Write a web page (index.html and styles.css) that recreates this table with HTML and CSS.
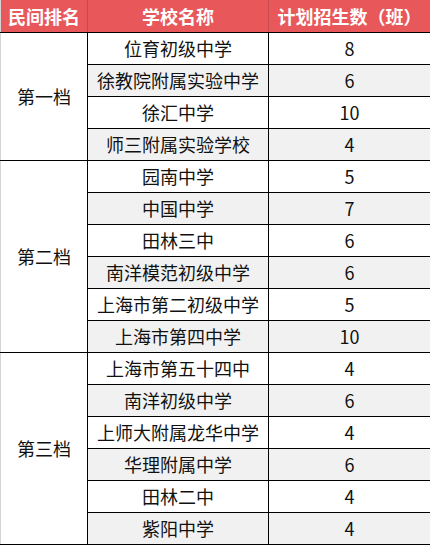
FILE: index.html
```html
<!DOCTYPE html>
<html lang="zh">
<head>
<meta charset="utf-8">
<link rel="stylesheet" href="styles.css">
</head>
<body>
<table class="plan">
  <colgroup>
    <col class="c1"><col class="c2"><col class="c3">
  </colgroup>
  <thead>
    <tr class="head">
      <th>民间排名</th><th>学校名称</th><th>计划招生数（班）</th>
    </tr>
  </thead>
  <tbody>
    <tr><td class="tier" rowspan="4">第一档</td><td>位育初级中学</td><td>8</td></tr>
    <tr class="alt"><td>徐教院附属实验中学</td><td>6</td></tr>
    <tr><td>徐汇中学</td><td>10</td></tr>
    <tr class="alt"><td>师三附属实验学校</td><td>4</td></tr>
    <tr><td class="tier" rowspan="6">第二档</td><td>园南中学</td><td>5</td></tr>
    <tr class="alt"><td>中国中学</td><td>7</td></tr>
    <tr><td>田林三中</td><td>6</td></tr>
    <tr class="alt"><td>南洋模范初级中学</td><td>6</td></tr>
    <tr><td>上海市第二初级中学</td><td>5</td></tr>
    <tr class="alt"><td>上海市第四中学</td><td>10</td></tr>
    <tr><td class="tier" rowspan="6">第三档</td><td>上海市第五十四中</td><td>4</td></tr>
    <tr class="alt"><td>南洋初级中学</td><td>6</td></tr>
    <tr><td>上师大附属龙华中学</td><td>4</td></tr>
    <tr class="alt"><td>华理附属中学</td><td>6</td></tr>
    <tr><td>田林二中</td><td>4</td></tr>
    <tr class="alt"><td>紫阳中学</td><td>4</td></tr>
  </tbody>
</table>
</body>
</html>
```
FILE: styles.css
```css
html, body {
  margin: 0;
  padding: 0;
  background: #ffffff;
}
.plan {
  width: 430px;
  table-layout: fixed;
  border-collapse: collapse;
  font-family: "Microsoft YaHei", "Noto Sans CJK SC", sans-serif;
  font-size: 18px;
  color: #111;
  border-left: 1px solid #d4d4d4;
  border-right: 1px solid #d4d4d4;
  border-bottom: 1px solid #000;
}
.c1 { width: 87px; }
.c2 { width: 181px; }
.c3 { width: 162px; }
.plan tr { height: 32px; }
.plan th, .plan td {
  padding: 0;
  text-align: center;
  vertical-align: middle;
  line-height: 30px;
  white-space: nowrap;
}
.plan td {
  border: 1px solid #000;
}
.head th {
  background: #e8585b;
  color: #fff;
  font-weight: bold;
  border-left: 1px solid #c34b4d;
  border-bottom: 1px solid #000;
}
.head th:first-child {
  border-left: 1px solid #d4d4d4;
}
.plan td:first-child { border-left: 1px solid #d4d4d4; }
.plan td:last-child { border-right: 1px solid #d4d4d4; }
.plan tr.alt td { background: #f1f1f1; }
.plan td.tier { background: #fff; }
```
